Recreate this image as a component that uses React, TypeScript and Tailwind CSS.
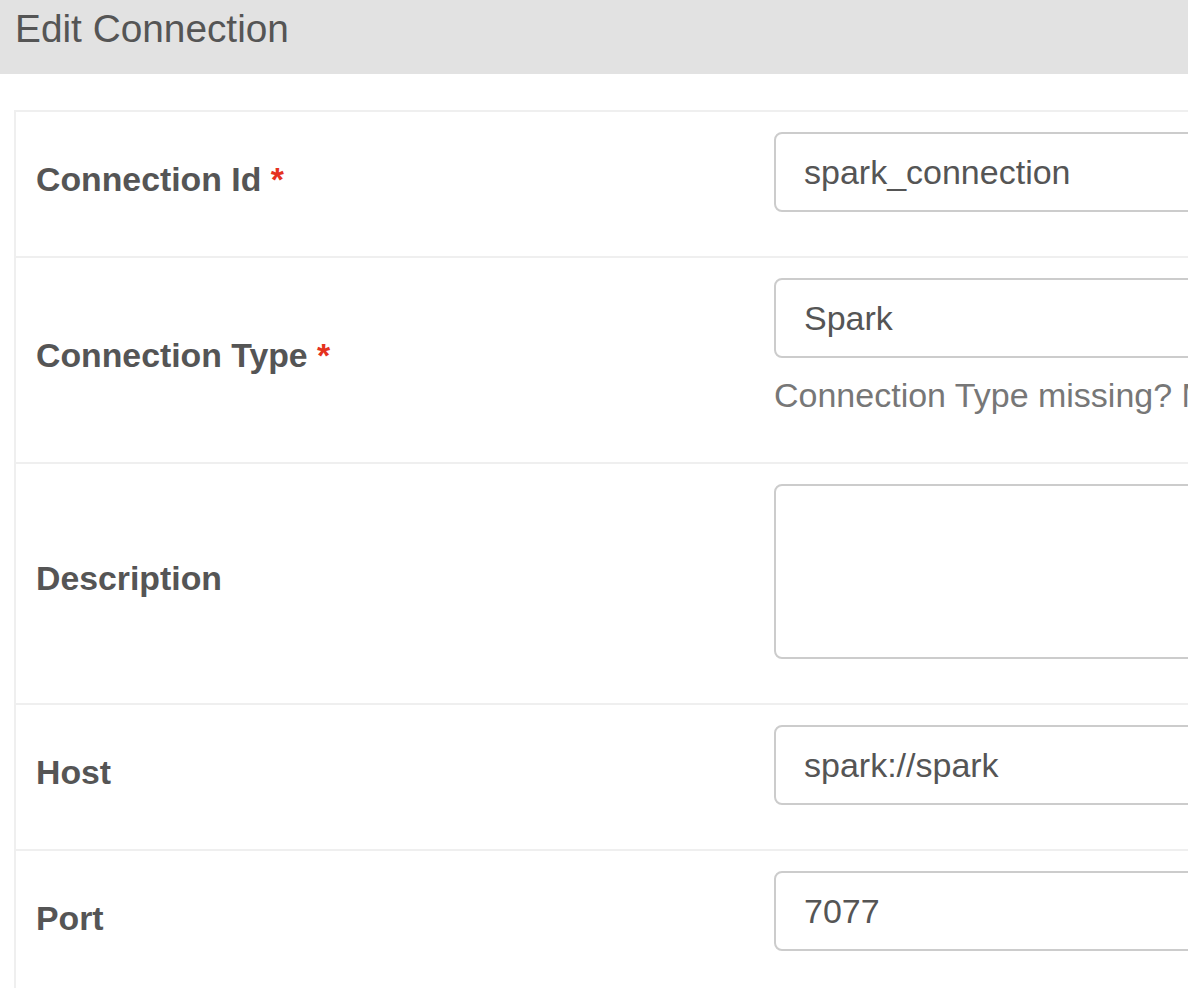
import React from "react";

const font = { fontFamily: '"Liberation Sans", Arial, Helvetica, sans-serif' };

function Label({ text, required }: { text: string; required?: boolean }) {
  return (
    <div className="w-[738px] shrink-0 pl-[20px] pb-[10px] flex items-center">
      <span className="text-[33.8px] font-bold text-[#555555] leading-normal">
        {text}
        {required && <strong className="text-[#e5321e]"> *</strong>}
      </span>
    </div>
  );
}

function Row({ children, last }: { children: React.ReactNode; last?: boolean }) {
  return (
    <div className={"flex " + (last ? "" : "border-b-2 border-[#efefef]")}>{children}</div>
  );
}

function Input({ value }: { value: string }) {
  return (
    <div className="h-[80px] w-[700px] border-2 border-[#cccccc] rounded-[8px] pl-[28px] flex items-center text-[34px] text-[#555555] bg-white">
      {value}
    </div>
  );
}

export default function App() {
  return (
    <div className="w-[1188px] h-[988px] overflow-hidden bg-white" style={font}>
      <div className="h-[74px] bg-[#e2e2e2] pl-[15px] pt-[8px]">
        <div className="text-[38.8px] leading-[42px] text-[#555555]">Edit Connection</div>
      </div>
      <div className="mt-[36px] ml-[14px] w-[1400px] border-2 border-[#efefef]">
        <Row>
          <Label text="Connection Id" required />
          <div className="pl-[20px] pt-[20px] pb-[44px]">
            <Input value="spark_connection" />
          </div>
        </Row>
        <Row>
          <Label text="Connection Type" required />
          <div className="pl-[20px] pt-[20px] pb-[42px]">
            <Input value="Spark" />
            <div className="mt-[12px] text-[34px] leading-[50px] text-[#777777] whitespace-nowrap">
              Connection Type missing? Make sure you've installed the corresponding Airflow Provider Package.
            </div>
          </div>
        </Row>
        <Row>
          <Label text="Description" />
          <div className="pl-[20px] pt-[20px] pb-[44px]">
            <div className="h-[175px] w-[700px] border-2 border-[#cccccc] rounded-[8px] bg-white" />
          </div>
        </Row>
        <Row>
          <Label text="Host" />
          <div className="pl-[20px] pt-[20px] pb-[44px]">
            <Input value="spark://spark" />
          </div>
        </Row>
        <Row last>
          <Label text="Port" />
          <div className="pl-[20px] pt-[20px] pb-[44px]">
            <Input value="7077" />
          </div>
        </Row>
      </div>
    </div>
  );
}
